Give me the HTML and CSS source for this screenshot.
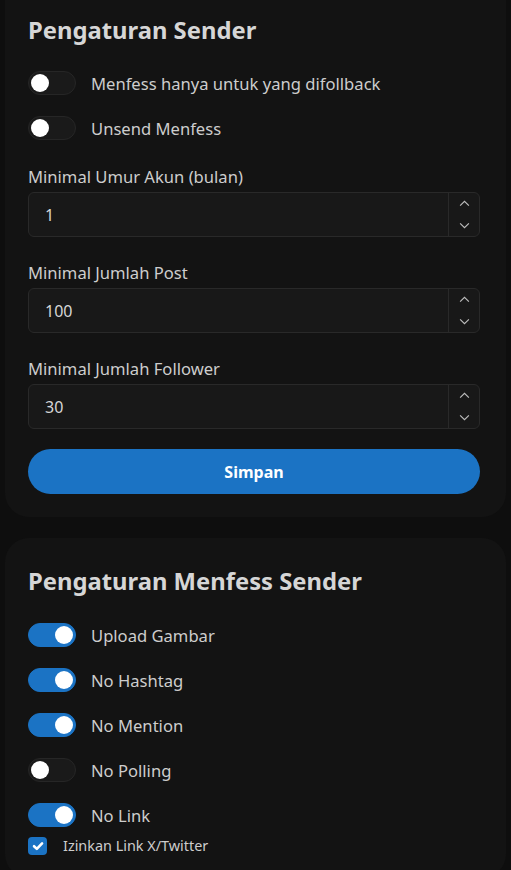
FILE: index.html
```html
<!DOCTYPE html>
<html lang="id">
<head>
<meta charset="utf-8">
<link rel="stylesheet" href="styles.css">
</head>
<body>
<div class="page">
  <section class="card card-first">
    <h2 class="title">Pengaturan Sender</h2>
    <div class="toggles">
      <label class="toggle-row"><span class="switch"><span class="knob"></span></span><span class="toggle-label">Menfess hanya untuk yang difollback</span></label>
      <label class="toggle-row"><span class="switch"><span class="knob"></span></span><span class="toggle-label">Unsend Menfess</span></label>
    </div>
    <div class="field">
      <div class="field-label">Minimal Umur Akun (bulan)</div>
      <div class="number-input"><span class="value">1</span><span class="spin"><svg viewBox="0 0 12 8" class="arrow"><path d="M1 6.5 L6 1.5 L11 6.5"/></svg><svg viewBox="0 0 12 8" class="arrow"><path d="M1 1.5 L6 6.5 L11 1.5"/></svg></span></div>
    </div>
    <div class="field">
      <div class="field-label">Minimal Jumlah Post</div>
      <div class="number-input"><span class="value">100</span><span class="spin"><svg viewBox="0 0 12 8" class="arrow"><path d="M1 6.5 L6 1.5 L11 6.5"/></svg><svg viewBox="0 0 12 8" class="arrow"><path d="M1 1.5 L6 6.5 L11 1.5"/></svg></span></div>
    </div>
    <div class="field">
      <div class="field-label">Minimal Jumlah Follower</div>
      <div class="number-input"><span class="value">30</span><span class="spin"><svg viewBox="0 0 12 8" class="arrow"><path d="M1 6.5 L6 1.5 L11 6.5"/></svg><svg viewBox="0 0 12 8" class="arrow"><path d="M1 1.5 L6 6.5 L11 1.5"/></svg></span></div>
    </div>
    <button class="btn">Simpan</button>
  </section>

  <section class="card card-second">
    <h2 class="title">Pengaturan Menfess Sender</h2>
    <div class="toggles">
      <label class="toggle-row"><span class="switch on"><span class="knob"></span></span><span class="toggle-label">Upload Gambar</span></label>
      <label class="toggle-row"><span class="switch on"><span class="knob"></span></span><span class="toggle-label">No Hashtag</span></label>
      <label class="toggle-row"><span class="switch on"><span class="knob"></span></span><span class="toggle-label">No Mention</span></label>
      <label class="toggle-row"><span class="switch"><span class="knob"></span></span><span class="toggle-label">No Polling</span></label>
      <label class="toggle-row"><span class="switch on"><span class="knob"></span></span><span class="toggle-label">No Link</span></label>
    </div>
    <label class="check-row"><span class="checkbox"><svg viewBox="0 0 12 12"><path d="M2.6 6.2 L5 8.5 L9.5 3.7"/></svg></span><span class="check-label">Izinkan Link X/Twitter</span></label>
  </section>
</div>
</body>
</html>
```

FILE: styles.css
```css
* { box-sizing: border-box; }
html, body { margin: 0; padding: 0; background: #0e0e0e; }
body {
  font-family: "Noto Sans", Lato, sans-serif;
  color: #cfcfcf;
  height: 870px;
  overflow: hidden;
}
.page {
  padding: 0 5px;
  display: flex;
  flex-direction: column;
  gap: 21px;
}
.card {
  background: #131313;
  border-radius: 24px;
  padding: 14px 26px 23px 23px;
}
.card-first {
  margin-top: -12px;
  border-top-left-radius: 0;
  border-top-right-radius: 0;
  padding-top: 26px;
}
.title {
  margin: 0;
  font-size: 23.8px;
  font-weight: 700;
  color: #d6d6d6;
  line-height: 32px;
}
.card-second .title { margin-top: 13px; }
.toggles {
  display: flex;
  flex-direction: column;
  gap: 21px;
  margin-top: 25px;
}
.card-second .toggles { margin-top: 26px; }
.toggle-row {
  display: flex;
  align-items: center;
  gap: 15px;
  height: 24px;
}
.switch {
  position: relative;
  width: 48px;
  height: 24px;
  border-radius: 12px;
  background: #1a1a1a;
  border: 1px solid #262626;
  flex: none;
}
.switch .knob {
  position: absolute;
  top: 2px;
  left: 2px;
  width: 18px;
  height: 18px;
  border-radius: 50%;
  background: #ffffff;
}
.switch.on {
  background: #1b73c4;
  border-color: #1b73c4;
}
.switch.on .knob { left: 26px; }
.toggle-label {
  font-size: 16.6px;
  color: #cdcdcd;
}
.field { margin-top: 26px; }
.toggles + .field { margin-top: 27px; }
.field-label {
  font-size: 16.6px;
  color: #cdcdcd;
  line-height: 20px;
  margin-bottom: 5px;
}
.number-input {
  display: flex;
  height: 45px;
  background: #181818;
  border: 1px solid #292929;
  border-radius: 6px;
}
.number-input .value {
  flex: 1;
  display: flex;
  align-items: center;
  padding-left: 16px;
  font-size: 16px;
  color: #d6d6d6;
}
.spin {
  width: 31px;
  border-left: 1px solid #292929;
  display: flex;
  flex-direction: column;
  align-items: center;
  justify-content: center;
  gap: 15px;
}
.arrow {
  width: 11px;
  height: 7px;
  fill: none;
  stroke: #bdbdbd;
  stroke-width: 1.3;
}
.btn {
  margin-top: 20px;
  width: 100%;
  height: 45px;
  border: none;
  border-radius: 23px;
  background: #1b73c4;
  color: #ffffff;
  font-family: inherit;
  font-size: 16px;
  font-weight: 700;
  display: block;
}
.check-row {
  display: flex;
  align-items: center;
  gap: 16px;
  margin-top: 9px;
}
.checkbox {
  width: 19px;
  height: 18px;
  border-radius: 4px;
  background: #1b73c4;
  display: flex;
  align-items: center;
  justify-content: center;
  flex: none;
}
.checkbox svg {
  width: 14px;
  height: 14px;
  fill: none;
  stroke: #ffffff;
  stroke-width: 2.2;
  stroke-linecap: round;
  stroke-linejoin: round;
}
.check-label {
  font-size: 14.4px;
  color: #cdcdcd;
}
```
